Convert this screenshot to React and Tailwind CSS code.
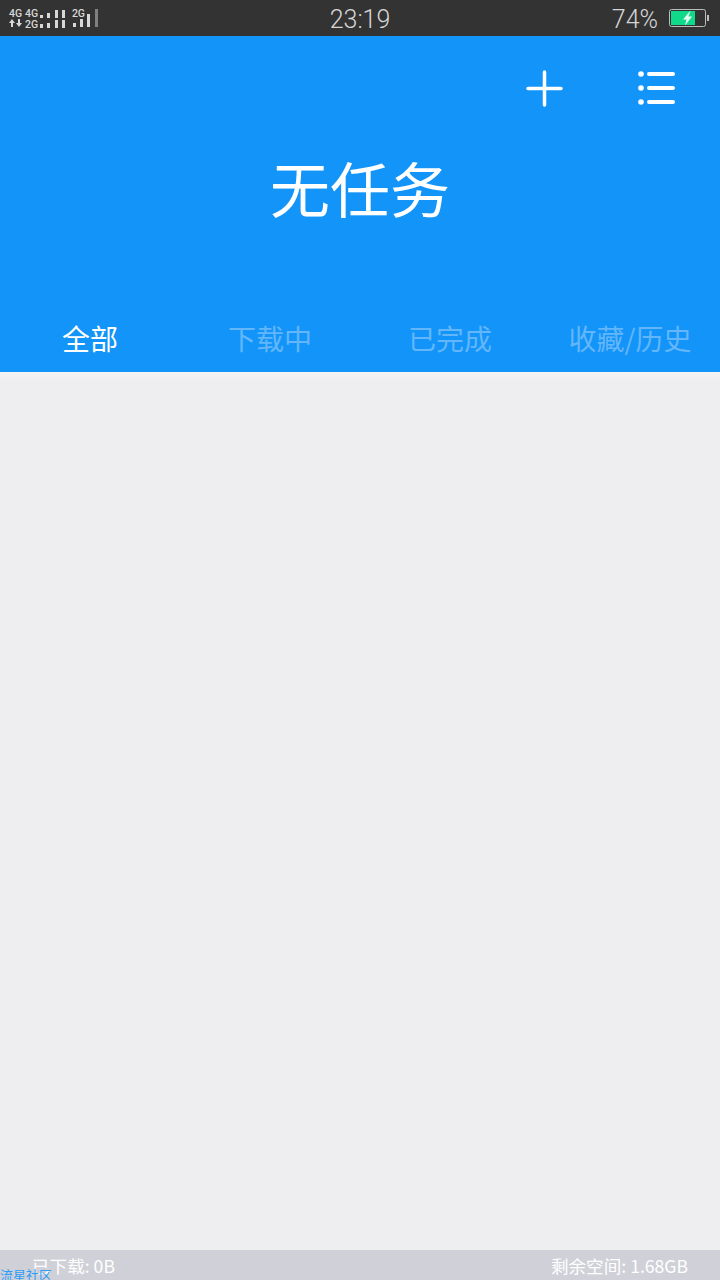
import React from "react";

const font = { fontFamily: '"Noto Sans CJK SC", Roboto, sans-serif' };

// one row of signal bars, tops differ per bar
function Bars({ heights }) {
  return (
    <div className="flex items-end gap-[4.3px] h-[9px]">
      {heights.map((h, i) => (
        <div key={i} className="w-[3px] bg-[#d8d8d8]" style={{ height: h }} />
      ))}
    </div>
  );
}

function Signal() {
  return (
    <div className="flex items-start pl-[9px] pt-[8px] font-['Roboto'] text-[#d8d8d8] font-medium">
      <div className="flex flex-col text-[10.5px] leading-[11px] w-[16px]">
        <span>4G</span>
        <svg width="13" height="8" viewBox="0 0 13 8">
          <path d="M3 0 L6 4 H4 V8 H2 V4 H0 Z M10 8 L13 4 H11 V0 H9 V4 H7 Z" fill="#d8d8d8" />
        </svg>
      </div>
      <div className="flex flex-col text-[10.5px] leading-[11px] w-[15px]">
        <span>4G</span>
        <span>2G</span>
      </div>
      <div className="flex flex-col gap-[1px] pt-[1px]">
        <Bars heights={[3, 5, 8, 8]} />
        <Bars heights={[4, 5, 8, 8]} />
      </div>
      <div className="flex flex-col ml-[7px] text-[10.5px] leading-[11px] w-[22px]">
        <span>2G</span>
        <div className="flex items-end gap-[4px] h-[8px] pl-[1px]">
          <div className="w-[3px] h-[4px] bg-[#d8d8d8]" />
          <div className="w-[3px] h-[8px] bg-[#d8d8d8]" />
        </div>
      </div>
      <div className="flex items-end gap-[5px] h-[19px] -ml-[7px]">
        <div className="w-[3px] h-[13px] bg-[#d8d8d8]" />
        <div className="w-[3px] h-[18px] bg-[#808080]" />
      </div>
    </div>
  );
}

function Battery() {
  return (
    <svg width="40" height="18" viewBox="0 0 40 18" className="block">
      <rect x="0.5" y="0.5" width="36" height="17" rx="2" fill="none" stroke="#bdbdbd" />
      <rect x="2" y="2" width="24" height="14" fill="#10d98a" />
      <rect x="38" y="6" width="2" height="6" fill="#bdbdbd" />
      <path d="M21.5 1.5 L14 10.5 H17.5 L16 16.5 L23 7.5 H19.5 Z" fill="#e8fff4" />
    </svg>
  );
}

function Tab({ label, active }) {
  return (
    <div
      className={`flex-1 text-center text-[28px] leading-[40px] ${
        active ? "text-white" : "text-[#62b6f9]"
      }`}
    >
      {label}
    </div>
  );
}

export default function App() {
  return (
    <div className="w-[720px] h-[1280px] flex flex-col bg-[#eeeef0] overflow-hidden" style={font}>
      <div className="h-[36px] bg-[#333333] flex justify-between relative">
        <Signal />
        <div className="absolute left-0 right-0 top-0 text-center font-['Roboto'] font-light text-[25px] leading-[40px] text-[#d6d6d6]">
          23:19
        </div>
        <div className="flex items-center pr-[11px] gap-[11px]">
          <span className="font-['Roboto'] font-light text-[25px] leading-[39px] h-[36px] text-[#d6d6d6]">74%</span>
          <Battery />
        </div>
      </div>

      <div className="h-[336px] bg-[#1294f9] flex flex-col">
        <div className="flex justify-end pt-[34px] pr-[45px] gap-[75px]">
          <svg width="37" height="37" viewBox="0 0 37 37">
            <path d="M18.5 2 V35 M2 18.5 H35" stroke="#fff" strokeWidth="3.5" strokeLinecap="round" />
          </svg>
          <svg width="37" height="37" viewBox="0 0 37 37">
            <circle cx="3" cy="4" r="2.8" fill="#fff" />
            <circle cx="3" cy="18" r="2.8" fill="#fff" />
            <circle cx="3" cy="32" r="2.8" fill="#fff" />
            <path d="M11 4 H35 M11 18 H35 M11 32 H35" stroke="#fff" strokeWidth="4" strokeLinecap="round" />
          </svg>
        </div>
        <div className="mt-[42px] text-center text-[60px] leading-[76px] text-white">无任务</div>
        <div className="flex mt-[93px]">
          <Tab label="全部" active />
          <Tab label="下载中" />
          <Tab label="已完成" />
          <Tab label="收藏/历史" />
        </div>
      </div>

      <div className="flex-1 bg-gradient-to-b from-[#f4f4f5] to-[#eeeef0] to-[1%]" />

      <div className="h-[30px] bg-[#d0d0d8] relative flex justify-between pl-[32px] pr-[32px] text-[17.6px] leading-[31px] text-white">
        <span>已下载: 0B</span>
        <span>剩余空间: 1.68GB</span>
        <span className="absolute left-0 top-[17px] text-[13px] leading-[16px] text-[#2f9df5]">流星社区</span>
      </div>
    </div>
  );
}
